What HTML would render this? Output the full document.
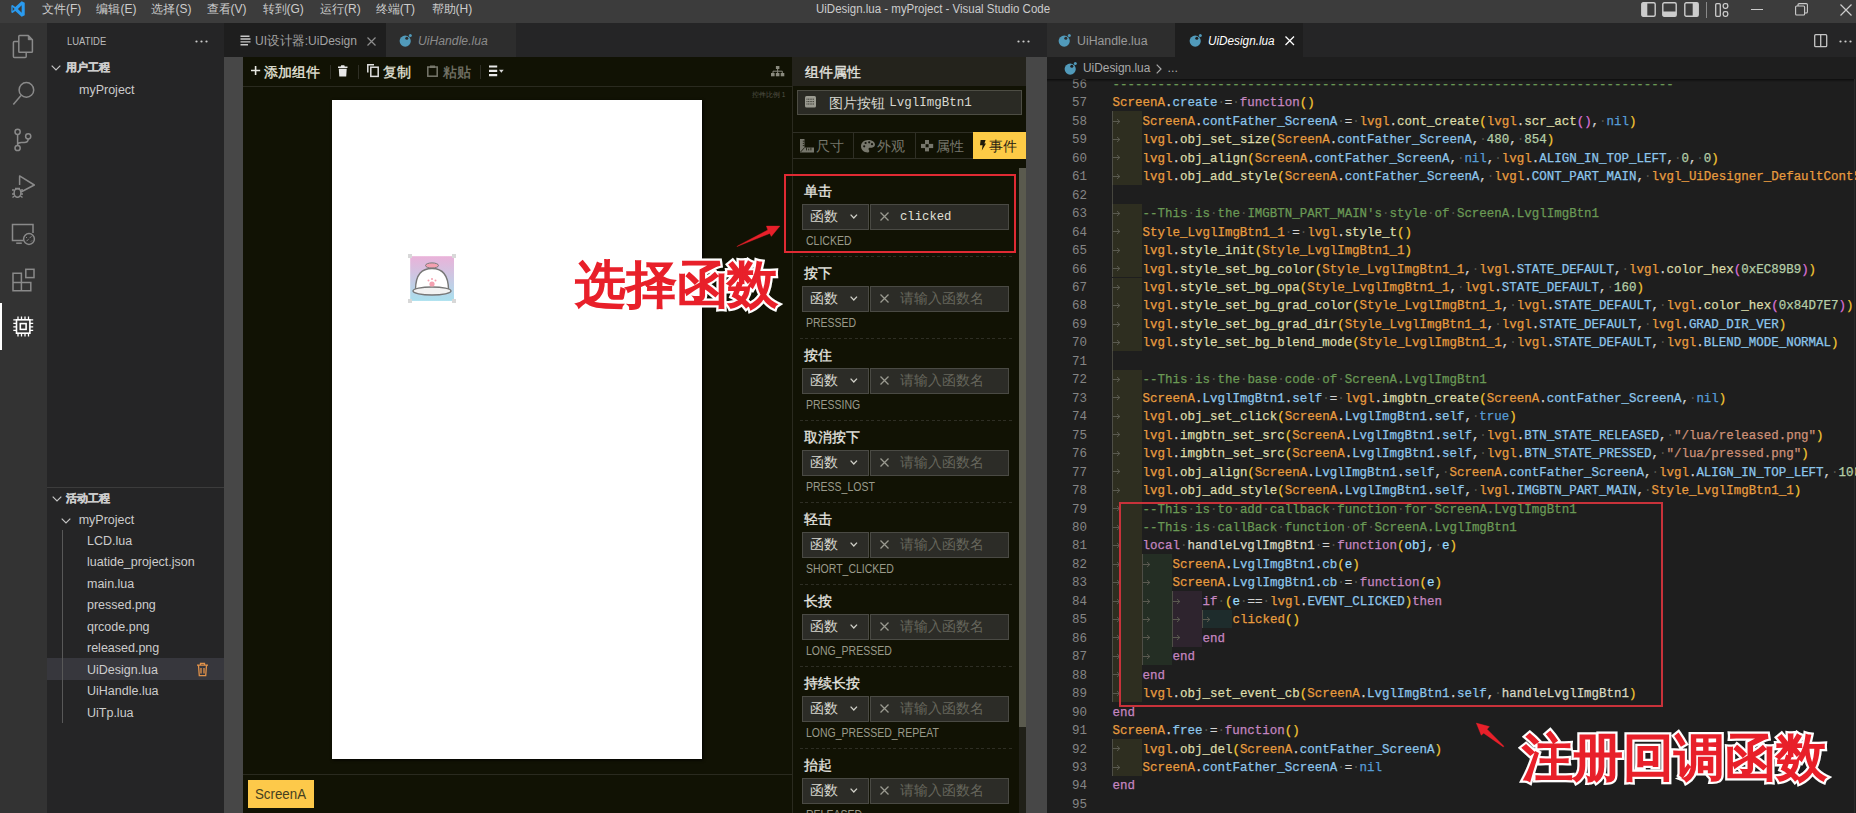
<!DOCTYPE html><html><head><meta charset="utf-8"><style>
*{margin:0;padding:0;box-sizing:border-box}
html,body{width:1856px;height:813px;overflow:hidden}
body{position:relative;background:#1e1e1e;font-family:"Liberation Sans",sans-serif}
.a{position:absolute}
.t{white-space:pre}
.code{position:absolute;font-family:"Liberation Mono",monospace;font-size:12.48px;-webkit-text-stroke:0.25px currentColor;line-height:18.45px;white-space:pre;height:18.45px}
.code i{font-style:normal;color:#55554c;-webkit-text-stroke:0}
.ln{position:absolute;left:-7px;width:47px;text-align:right;font-family:"Liberation Mono",monospace;font-size:12.5px;line-height:18.45px;color:#858585}
svg{position:absolute;overflow:visible}
</style></head><body><div class="a" style="left:0px;top:0px;width:1856px;height:23px;background:#3c3c3c"></div>
<div class="a t" style="left:41.9px;top:3px;font-size:12px;line-height:12px;color:#cccccc;">文件(F)</div>
<div class="a t" style="left:96.4px;top:3px;font-size:12px;line-height:12px;color:#cccccc;">编辑(E)</div>
<div class="a t" style="left:151.4px;top:3px;font-size:12px;line-height:12px;color:#cccccc;">选择(S)</div>
<div class="a t" style="left:206.5px;top:3px;font-size:12px;line-height:12px;color:#cccccc;">查看(V)</div>
<div class="a t" style="left:262.5px;top:3px;font-size:12px;line-height:12px;color:#cccccc;">转到(G)</div>
<div class="a t" style="left:320px;top:3px;font-size:12px;line-height:12px;color:#cccccc;">运行(R)</div>
<div class="a t" style="left:375.7px;top:3px;font-size:12px;line-height:12px;color:#cccccc;">终端(T)</div>
<div class="a t" style="left:431.5px;top:3px;font-size:12px;line-height:12px;color:#cccccc;">帮助(H)</div>
<div class="a t" style="left:816.2px;top:3px;font-size:12px;line-height:12px;color:#cccccc;;transform:scaleX(0.957);transform-origin:0 0">UiDesign.lua - myProject - Visual Studio Code</div>
<div class="a" style="left:0px;top:23px;width:47px;height:790px;background:#333333"></div>
<div class="a" style="left:0px;top:303px;width:2px;height:47px;background:#ffffff"></div>
<svg style="left:0px;top:23px;" width="47" height="47" viewBox="0 23 47 47"><rect x="13.4" y="41.5" width="12.8" height="15.9" rx="1" fill="none" stroke="#8a8a8a" stroke-width="1.5"/><path d="M19.6 35.6H28.3L32.4 39.7V51.4Q32.4 52.2 31.6 52.2H19.6Q18.8 52.2 18.8 51.4V36.4Q18.8 35.6 19.6 35.6Z" fill="#333333" stroke="#8a8a8a" stroke-width="1.5" stroke-linejoin="round"/><path d="M28.3 35.6V39.7H32.4Z" fill="#8a8a8a" stroke="#8a8a8a" stroke-width="1"/></svg>
<svg style="left:0px;top:70px;" width="47" height="47" viewBox="0 70 47 47"><circle cx="26.4" cy="89.9" r="7.3" fill="none" stroke="#8a8a8a" stroke-width="1.5"/><path d="M21 95.4L13.3 104.4" fill="none" stroke="#8a8a8a" stroke-width="1.5"/></svg>
<svg style="left:0px;top:117px;" width="47" height="47" viewBox="0 117 47 47"><circle cx="17.6" cy="131.8" r="2.6" fill="none" stroke="#8a8a8a" stroke-width="1.5"/><circle cx="28.2" cy="136.3" r="2.6" fill="none" stroke="#8a8a8a" stroke-width="1.5"/><circle cx="17.6" cy="148" r="2.6" fill="none" stroke="#8a8a8a" stroke-width="1.5"/><path d="M17.6 134.4V145.4M28.2 138.9c0 2.5-1.5 3.5-4 3.5h-2.8c-2 0-3.8 0.6-3.8 2.6" fill="none" stroke="#8a8a8a" stroke-width="1.5"/></svg>
<svg style="left:0px;top:164px;" width="47" height="47" viewBox="0 164 47 47"><path d="M19.6 185V175.9L34.3 185L21 192" fill="none" stroke="#8a8a8a" stroke-width="1.5" stroke-linejoin="round"/><ellipse cx="17.5" cy="193" rx="3.4" ry="4.2" fill="none" stroke="#8a8a8a" stroke-width="1.5"/><path d="M12 190h2.5M20.5 190H23M12 194h2.5M20.5 194H23M12.5 197.5l2-1.5M22.5 197.5l-2-1.5M15 188.5h5" fill="none" stroke="#8a8a8a" stroke-width="1.5" stroke-width="1.2"/></svg>
<svg style="left:0px;top:211px;" width="47" height="47" viewBox="0 211 47 47"><path d="M23.5 240.6H12.5V224.5H33V233" fill="none" stroke="#8a8a8a" stroke-width="1.5"/><path d="M16.2 243.2h5.6" fill="none" stroke="#8a8a8a" stroke-width="1.5"/><circle cx="29" cy="239" r="5.4" fill="#333" stroke="#8a8a8a" stroke-width="1.5"/><path d="M26.5 241.2l2-2M29.5 238.2l2-2M27 237l-1 1M32 240.5l-1 1" stroke="#8a8a8a" stroke-width="1"/></svg>
<svg style="left:0px;top:258px;" width="47" height="47" viewBox="0 258 47 47"><path d="M13 273.3h8.4v9.2h9.4v8.3H13Z M13 282.5h8.4v8.3 M21.4 282.5v8.3" fill="none" stroke="#8a8a8a" stroke-width="1.5"/><rect x="25.8" y="269.3" width="8.2" height="8.3" fill="none" stroke="#8a8a8a" stroke-width="1.5"/></svg>
<svg style="left:0px;top:305px;" width="47" height="47" viewBox="0 305 47 47"><rect x="16.5" y="319.8" width="13.4" height="13.4" fill="none" stroke="#ffffff" stroke-width="1.6"/><rect x="20.3" y="323.6" width="5.8" height="5.8" fill="none" stroke="#ffffff" stroke-width="1.6"/><path d="M18.0 316.6v3M18.0 333v3.4M13.3 319.8h3.2M29.8 319.8h3.4" stroke="#ffffff" stroke-width="1.3"/><path d="M21.5 316.6v3M21.5 333v3.4M13.3 323.3h3.2M29.8 323.3h3.4" stroke="#ffffff" stroke-width="1.3"/><path d="M25.0 316.6v3M25.0 333v3.4M13.3 326.8h3.2M29.8 326.8h3.4" stroke="#ffffff" stroke-width="1.3"/><path d="M28.5 316.6v3M28.5 333v3.4M13.3 330.3h3.2M29.8 330.3h3.4" stroke="#ffffff" stroke-width="1.3"/></svg>
<svg style="left:9.5px;top:1px;" width="16" height="16" viewBox="0 0 24 24"><path d="M17.5 0.3L7.9 9.1 3.8 6 2 6.8v10.4l1.8.8 4.1-3.1 9.6 8.8 4.6-2.2V2.5zM3.9 15V9l3 3zm13.6 2.6L11.9 12l5.6-5.6z" fill="#2a9bf0"/></svg>
<svg style="left:1641px;top:2px;" width="15" height="15" viewBox="0 0 15 15"><rect x="0.8" y="0.8" width="13.4" height="13.4" rx="1.5" fill="none" stroke="#cccccc" stroke-width="1.4"/><rect x="0.8" y="0.8" width="5.5" height="13.4" fill="#cccccc"/></svg>
<svg style="left:1662px;top:2px;" width="15" height="15" viewBox="0 0 15 15"><rect x="0.8" y="0.8" width="13.4" height="13.4" rx="1.5" fill="none" stroke="#cccccc" stroke-width="1.4"/><rect x="0.8" y="9.5" width="13.4" height="4.7" fill="#cccccc"/></svg>
<svg style="left:1683.5px;top:2px;" width="15" height="15" viewBox="0 0 15 15"><rect x="0.8" y="0.8" width="13.4" height="13.4" rx="1.5" fill="none" stroke="#cccccc" stroke-width="1.4"/><rect x="8.7" y="0.8" width="5.5" height="13.4" fill="#cccccc"/></svg>
<div class="a" style="left:1705.5px;top:1.5px;width:1px;height:16px;background:#8a8a8a"></div>
<svg style="left:1714.5px;top:2.5px;" width="14" height="14" viewBox="0 0 14 14"><rect x="0.7" y="0.7" width="4.6" height="12.6" rx="1" fill="none" stroke="#cccccc" stroke-width="1.3"/><rect x="8.2" y="0.7" width="4.6" height="4.6" rx="1.8" fill="none" stroke="#cccccc" stroke-width="1.3"/><rect x="8.2" y="8.7" width="4.6" height="4.6" rx="1.8" fill="none" stroke="#cccccc" stroke-width="1.3"/></svg>
<div class="a" style="left:1751px;top:9px;width:11.5px;height:1px;background:#cccccc"></div>
<svg style="left:1795px;top:3px;" width="13" height="13" viewBox="0 0 13 13"><rect x="0.6" y="3" width="9" height="9" rx="1" fill="none" stroke="#cccccc" stroke-width="1.1"/><path d="M3 3V1.8C3 1 3.5 0.6 4.3 0.6H11.2C12 0.6 12.4 1 12.4 1.8V8.7C12.4 9.5 12 10 11.2 10H9.6" fill="none" stroke="#cccccc" stroke-width="1.1"/></svg>
<svg style="left:1840px;top:3.5px;" width="12" height="12" viewBox="0 0 12 12"><path d="M0.5 0.5L11.5 11.5M11.5 0.5L0.5 11.5" stroke="#cccccc" stroke-width="1.2"/></svg>
<div class="a" style="left:47px;top:23px;width:177px;height:790px;background:#252526"></div>
<div class="a t" style="left:66.5px;top:36px;font-size:11px;line-height:11px;color:#bbbbbb;;transform:scaleX(0.86);transform-origin:0 0">LUATIDE</div>
<svg style="left:195px;top:39.5px;" width="13" height="3" viewBox="0 0 13 3"><circle cx="1.5" cy="1.5" r="1.1" fill="#ccc"/><circle cx="6.5" cy="1.5" r="1.1" fill="#ccc"/><circle cx="11.5" cy="1.5" r="1.1" fill="#ccc"/></svg>
<svg style="left:51.3px;top:64.5px;" width="10" height="6" viewBox="0 0 10 6"><path d="M0.7 0.7L5 5L9.3 0.7" fill="none" stroke="#c5c5c5" stroke-width="1.2"/></svg>
<div class="a t" style="left:66px;top:62px;font-size:11px;line-height:11px;color:#cccccc;font-weight:bold;-webkit-text-stroke:0.35px #cccccc">用户工程</div>
<div class="a t" style="left:79px;top:84px;font-size:12.5px;line-height:12.5px;color:#cccccc;">myProject</div>
<div class="a" style="left:47px;top:487px;width:177px;height:1px;background:#3c3c3c"></div>
<svg style="left:51.8px;top:495.5px;" width="10" height="6" viewBox="0 0 10 6"><path d="M0.7 0.7L5 5L9.3 0.7" fill="none" stroke="#c5c5c5" stroke-width="1.2"/></svg>
<div class="a t" style="left:66px;top:493px;font-size:11px;line-height:11px;color:#cccccc;font-weight:bold;-webkit-text-stroke:0.35px #cccccc">活动工程</div>
<svg style="left:60.7px;top:517.5px;" width="10" height="6" viewBox="0 0 10 6"><path d="M0.7 0.7L5 5L9.3 0.7" fill="none" stroke="#c5c5c5" stroke-width="1.2"/></svg>
<div class="a t" style="left:78.7px;top:514px;font-size:12.5px;line-height:12.5px;color:#cccccc;">myProject</div>
<div class="a" style="left:47px;top:658px;width:177px;height:22px;background:#37373d"></div>
<div class="a" style="left:62px;top:530px;width:1px;height:193px;background:#585858"></div>
<div class="a t" style="left:87px;top:535.0px;font-size:12.5px;line-height:12.5px;color:#cccccc;">LCD.lua</div>
<div class="a t" style="left:87px;top:556.45px;font-size:12.5px;line-height:12.5px;color:#cccccc;">luatide_project.json</div>
<div class="a t" style="left:87px;top:577.9px;font-size:12.5px;line-height:12.5px;color:#cccccc;">main.lua</div>
<div class="a t" style="left:87px;top:599.35px;font-size:12.5px;line-height:12.5px;color:#cccccc;">pressed.png</div>
<div class="a t" style="left:87px;top:620.8px;font-size:12.5px;line-height:12.5px;color:#cccccc;">qrcode.png</div>
<div class="a t" style="left:87px;top:642.25px;font-size:12.5px;line-height:12.5px;color:#cccccc;">released.png</div>
<div class="a t" style="left:87px;top:663.7px;font-size:12.5px;line-height:12.5px;color:#cccccc;">UiDesign.lua</div>
<div class="a t" style="left:87px;top:685.15px;font-size:12.5px;line-height:12.5px;color:#cccccc;">UiHandle.lua</div>
<div class="a t" style="left:87px;top:706.6px;font-size:12.5px;line-height:12.5px;color:#cccccc;">UiTp.lua</div>
<svg style="left:196px;top:661.5px;" width="13" height="15" viewBox="0 0 13 15"><path d="M1 3.2h11M4.5 3V1.3h4V3M2.5 3.5l0.8 10.2h6.4l0.8-10.2M5 6v5.5M8 6v5.5" fill="none" stroke="#e2924a" stroke-width="1.3"/></svg>
<div class="a" style="left:224px;top:23px;width:823px;height:34px;background:#252526"></div>
<div class="a" style="left:224px;top:23px;width:161.5px;height:34px;background:#1e1e1e"></div>
<div class="a" style="left:385.5px;top:23px;width:130px;height:34px;background:#2d2d2d"></div>
<svg style="left:240px;top:34.5px;" width="11" height="11" viewBox="0 0 11 11"><path d="M0.5 1.2h9M0.5 4h10M0.5 6.9h10M0.5 9.7h7.5" stroke="#c8c8c8" stroke-width="1.4"/></svg>
<div class="a t" style="left:255.4px;top:35.3px;font-size:12.5px;line-height:12.5px;color:#a3a3a3;;transform:scaleX(0.965);transform-origin:0 0">UI设计器:UiDesign</div>
<svg style="left:367px;top:37px;" width="9" height="9" viewBox="0 0 9 9"><path d="M0.5 0.5L8.5 8.5M8.5 0.5L0.5 8.5" stroke="#8e8e8e" stroke-width="1.2"/></svg>
<svg style="left:398.5px;top:33.8px;" width="13" height="13" viewBox="0 0 13 13"><circle cx="6.2" cy="7.1" r="5.6" fill="#519aba"/><circle cx="7.8" cy="4.3" r="1.5" fill="#2d2d2d"/><circle cx="11.3" cy="1.5" r="1.5" fill="#519aba"/></svg>
<div class="a t" style="left:418px;top:35px;font-size:12.5px;line-height:12.5px;color:#8b8b8b;font-style:italic;transform:scaleX(0.975);transform-origin:0 0">UiHandle.lua</div>
<svg style="left:1016.7px;top:39.5px;" width="13" height="3" viewBox="0 0 13 3"><circle cx="1.5" cy="1.5" r="1.1" fill="#ccc"/><circle cx="6.5" cy="1.5" r="1.1" fill="#ccc"/><circle cx="11.5" cy="1.5" r="1.1" fill="#ccc"/></svg>
<div class="a" style="left:224px;top:57px;width:19px;height:756px;background:#474747"></div>
<div class="a" style="left:243px;top:57px;width:783px;height:756px;background:#111204"></div>
<div class="a" style="left:1026px;top:57px;width:21px;height:756px;background:#474747"></div>
<div class="a" style="left:243px;top:85.5px;width:549px;height:1px;background:#2a2a1f"></div>
<svg style="left:250.8px;top:66.1px;" width="9.2" height="9" viewBox="0 0 9.2 9"><path d="M4.6 0v9M0 4.5h9.2" stroke="#e8e8e2" stroke-width="1.6"/></svg>
<div class="a t" style="left:264.4px;top:65.5px;font-size:13.5px;line-height:13.5px;color:#e6e6dc;-webkit-text-stroke:0.3px currentColor">添加组件</div>
<div class="a" style="left:329.5px;top:65.4px;width:1px;height:13.3px;background:#2f2f25"></div>
<svg style="left:338.4px;top:64.8px;" width="9.5" height="11.6" viewBox="0 0 9.5 11.6"><path d="M3.2 0.2h3.1l0.5 1.2h2.7v1.6H0v-1.6h2.7z" fill="#e8e8e8"/><path d="M0.8 3.8h7.9l-0.5 7.8H1.3z" fill="#e8e8e8"/></svg>
<div class="a" style="left:357.5px;top:65.4px;width:1px;height:13.3px;background:#2f2f25"></div>
<svg style="left:366.5px;top:64px;" width="12" height="13" viewBox="0 0 12 13"><path d="M0.8 8.5V0.8h6.2" fill="none" stroke="#e0e0e0" stroke-width="1.5"/><rect x="3.8" y="3.2" width="7.4" height="9.2" fill="none" stroke="#e0e0e0" stroke-width="1.5"/></svg>
<div class="a t" style="left:383.4px;top:65.5px;font-size:13.5px;line-height:13.5px;color:#e6e6dc;-webkit-text-stroke:0.3px currentColor">复制</div>
<svg style="left:426.6px;top:64.5px;" width="11" height="12" viewBox="0 0 11 12"><rect x="0.8" y="2" width="9.4" height="9.2" fill="none" stroke="#78786c" stroke-width="1.5"/><rect x="3" y="0.5" width="5" height="2.5" fill="#78786c"/></svg>
<div class="a t" style="left:442.5px;top:65.5px;font-size:13.5px;line-height:13.5px;color:#78786c;-webkit-text-stroke:0.3px currentColor">粘贴</div>
<div class="a" style="left:480px;top:65.4px;width:1px;height:13.3px;background:#2f2f25"></div>
<svg style="left:489px;top:65.3px;" width="15" height="12" viewBox="0 0 15 12"><path d="M0 1.5h8.2M0 5.8h8.2M0 10.1h8.2" stroke="#e8e8e8" stroke-width="2.2"/><path d="M10 4.8h4.7L12.35 7.8z" fill="#d8d8d8"/></svg>
<svg style="left:771.3px;top:66px;" width="13.3" height="10.3" viewBox="0 0 13.3 10.3"><rect x="4.9" y="0" width="3.5" height="3" fill="#8a8a7e"/><path d="M6.65 3v2.2M2 7V5.2h9.3V7M6.65 5.2V7" fill="none" stroke="#8a8a7e" stroke-width="1"/><rect x="0" y="7" width="3.6" height="3.3" fill="#8a8a7e"/><rect x="4.85" y="7" width="3.6" height="3.3" fill="#8a8a7e"/><rect x="9.7" y="7" width="3.6" height="3.3" fill="#8a8a7e"/></svg>
<div class="a" style="left:332px;top:100px;width:370.3px;height:659.4px;background:#ffffff;box-shadow:1px 1px 3px rgba(0,0,0,0.9)"></div>
<div class="a t" style="left:752px;top:91.5px;font-size:6.5px;line-height:6.5px;color:#55554a;">控件比例 1</div>
<svg style="left:408px;top:253.5px;" width="48" height="49" viewBox="0 0 48 49"><defs><linearGradient id="g1" x1="0" y1="0" x2="0" y2="1"><stop offset="0" stop-color="#eab2d9"/><stop offset="1" stop-color="#a9e0ee"/></linearGradient></defs>
<rect x="2.2" y="2.2" width="43.8" height="44.7" fill="url(#g1)"/>
<rect x="0" y="0" width="4" height="4" fill="#d8d8d8"/><rect x="44" y="0" width="4" height="4" fill="#d8d8d8"/><rect x="0" y="45" width="4" height="4" fill="#d8d8d8"/><rect x="44" y="45" width="4" height="4" fill="#d8d8d8"/>
<ellipse cx="24" cy="11.5" rx="6.5" ry="2.6" fill="#f4a0b0" stroke="#7a7a7a" stroke-width="1"/>
<path d="M7.5 36 C7.5 20 14 14.5 24 14.5 C34 14.5 40.5 20 40.5 36 Z" fill="#ffffff" stroke="#777" stroke-width="1.4"/>
<ellipse cx="24" cy="37" rx="19" ry="4" fill="#f2f2f2" stroke="#777" stroke-width="1.4"/>
<circle cx="24" cy="30" r="2.6" fill="#f4a0b0"/><circle cx="20.5" cy="26.5" r="1" fill="#f4a0b0"/><circle cx="24" cy="25" r="1" fill="#f4a0b0"/><circle cx="27.5" cy="26.5" r="1" fill="#f4a0b0"/></svg>
<div class="a" style="left:243px;top:773.5px;width:549px;height:1px;background:#2a2a1f"></div>
<div class="a" style="left:248px;top:780.3px;width:66px;height:27.7px;background:#fdc94a"></div>
<div class="a t" style="left:255px;top:786.5px;font-size:14px;line-height:14px;color:#45401f;;transform:scaleX(0.95);transform-origin:0 0">ScreenA</div>
<div class="a" style="left:792px;top:57px;width:234px;height:29px;background:#24231c"></div>
<div class="a" style="left:792px;top:86px;width:1px;height:727px;background:#2a2a1f"></div>
<div class="a t" style="left:804.5px;top:65.5px;font-size:13.5px;line-height:13.5px;color:#e6e6e0;-webkit-text-stroke:0.3px currentColor">组件属性</div>
<div class="a" style="left:796.7px;top:90.3px;width:225.6px;height:24.4px;background:#2a2a24;border:1px solid #4d4d44"></div>
<svg style="left:805px;top:96px;" width="11" height="11.5" viewBox="0 0 11 11.5"><rect x="0" y="0" width="11" height="11.5" rx="1.5" fill="#9a9a90"/><path d="M1.5 3.2h8M1.5 5.6h8M1.5 8h8" stroke="#2a2a24" stroke-width="0.9" stroke-dasharray="1 0.6"/></svg>
<div class="a t" style="left:828.5px;top:96.5px;font-size:13.5px;line-height:13.5px;color:#d8d8d0;">图片按钮</div>
<div class="a t" style="left:889.3px;top:97px;font-size:12.5px;line-height:12.5px;color:#d8d8d0;font-family:'Liberation Mono',monospace;transform:scaleX(1.0);transform-origin:0 0">LvglImgBtn1</div>
<div class="a" style="left:793px;top:132px;width:233px;height:27px;background:#111204;border-top:1px solid #2f2f25;border-bottom:1px solid #2f2f25"></div>
<div class="a" style="left:853.2px;top:132px;width:1px;height:27px;background:#2f2f25"></div>
<div class="a" style="left:914.6px;top:132px;width:1px;height:27px;background:#2f2f25"></div>
<div class="a" style="left:972.8px;top:132px;width:53.2px;height:27px;background:#fdcb46"></div>
<svg style="left:799.7px;top:139px;" width="14" height="13.6" viewBox="0 0 14 13.6"><path d="M0 0h4.5v8.6h9.5v5H0z" fill="#77776c"/><path d="M2.8 2.2h1.7M2.8 4.4h1.2M2.8 6.6h1.7M6.5 11.4v-2.8M8.7 11.4v-1.8M10.9 11.4v-2.8M0.4 13.2L4.5 8.6" stroke="#111204" stroke-width="0.8"/></svg>
<div class="a t" style="left:816px;top:139.5px;font-size:13.5px;line-height:13.5px;color:#77776c;">尺寸</div>
<svg style="left:860.7px;top:140px;" width="14" height="12.5" viewBox="0 0 14 12.5"><path d="M7 0C3 0 0 2.8 0 6.3 0 9.8 3 12.5 6.5 12.5 7.8 12.5 8.3 11.8 8.3 11 8.3 10 7.5 9.8 7.5 9 7.5 8.2 8.2 7.7 9 7.7H10.8C12.6 7.7 14 6.4 14 4.6 14 2 11 0 7 0z" fill="#77776c"/><circle cx="3.2" cy="6.3" r="1.1" fill="#12120a"/><circle cx="4.6" cy="3" r="1.1" fill="#12120a"/><circle cx="8.2" cy="2.3" r="1.1" fill="#12120a"/><circle cx="11" cy="4.2" r="1.1" fill="#12120a"/></svg>
<div class="a t" style="left:876.9px;top:139.5px;font-size:13.5px;line-height:13.5px;color:#77776c;">外观</div>
<svg style="left:921px;top:140.3px;" width="12.2" height="11.4" viewBox="0 0 12.2 11.4"><rect x="4" y="0" width="4" height="4.2" fill="#77776c"/><rect x="0" y="3.9" width="4.6" height="4.2" fill="#77776c"/><rect x="7.6" y="3.9" width="4.6" height="4.2" fill="#77776c"/><rect x="4" y="7.3" width="4" height="4.1" fill="#77776c"/></svg>
<div class="a t" style="left:935.7px;top:139.5px;font-size:13.5px;line-height:13.5px;color:#77776c;">属性</div>
<svg style="left:980.2px;top:139.7px;" width="6" height="10.5" viewBox="0 0 6 10.5"><path d="M0.6 0H5.6L4.4 3.6H6L1.8 10.5 2.6 5.2H0z" fill="#1e1a0a"/></svg>
<div class="a t" style="left:989px;top:139.5px;font-size:13.5px;line-height:13.5px;color:#2a2412;">事件</div>
<div class="a t" style="left:804.4px;top:184.5px;font-size:13.5px;line-height:13.5px;color:#e6e6e0;-webkit-text-stroke:0.3px currentColor">单击</div>
<div class="a" style="left:801.5px;top:204.2px;width:67.1px;height:25.4px;background:#2c2c27;border:1px solid #4a4a44"></div>
<div class="a t" style="left:810px;top:209.5px;font-size:13.5px;line-height:13.5px;color:#d8d8d0;">函数</div>
<svg style="left:850.4px;top:213.7px;" width="7.6" height="5" viewBox="0 0 7.6 5"><path d="M0.6 0.6L3.8 4L7 0.6" fill="none" stroke="#d0d0c8" stroke-width="1.3"/></svg>
<div class="a" style="left:870px;top:204.2px;width:138.7px;height:25.4px;background:#2c2c27;border:1px solid #4a4a44"></div>
<svg style="left:879.6px;top:211.5px;" width="9" height="9" viewBox="0 0 9 9"><path d="M0.5 0.5L8.5 8.5M8.5 0.5L0.5 8.5" stroke="#9a9a90" stroke-width="1.3"/></svg>
<div class="a t" style="left:899.6px;top:210.5px;font-size:12.5px;line-height:12.5px;color:#e0e0d8;font-family:'Liberation Mono',monospace;transform:scaleX(0.98);transform-origin:0 0">clicked</div>
<div class="a t" style="left:806px;top:234.5px;font-size:12px;line-height:12px;color:#9a9a8a;;transform:scaleX(0.875);transform-origin:0 0">CLICKED</div>
<div class="a" style="left:800px;top:256px;width:212px;height:1px;background:repeating-linear-gradient(90deg,#2e2e24 0 3px,transparent 3px 5.5px)"></div>
<div class="a t" style="left:804.4px;top:266.5px;font-size:13.5px;line-height:13.5px;color:#e6e6e0;-webkit-text-stroke:0.3px currentColor">按下</div>
<div class="a" style="left:801.5px;top:286.2px;width:67.1px;height:25.4px;background:#2c2c27;border:1px solid #4a4a44"></div>
<div class="a t" style="left:810px;top:291.5px;font-size:13.5px;line-height:13.5px;color:#d8d8d0;">函数</div>
<svg style="left:850.4px;top:295.7px;" width="7.6" height="5" viewBox="0 0 7.6 5"><path d="M0.6 0.6L3.8 4L7 0.6" fill="none" stroke="#d0d0c8" stroke-width="1.3"/></svg>
<div class="a" style="left:870px;top:286.2px;width:138.7px;height:25.4px;background:#2c2c27;border:1px solid #4a4a44"></div>
<svg style="left:879.6px;top:293.5px;" width="9" height="9" viewBox="0 0 9 9"><path d="M0.5 0.5L8.5 8.5M8.5 0.5L0.5 8.5" stroke="#9a9a90" stroke-width="1.3"/></svg>
<div class="a t" style="left:899.6px;top:291.5px;font-size:13.5px;line-height:13.5px;color:#66665c;">请输入函数名</div>
<div class="a t" style="left:806px;top:316.5px;font-size:12px;line-height:12px;color:#9a9a8a;;transform:scaleX(0.875);transform-origin:0 0">PRESSED</div>
<div class="a" style="left:800px;top:338px;width:212px;height:1px;background:repeating-linear-gradient(90deg,#2e2e24 0 3px,transparent 3px 5.5px)"></div>
<div class="a t" style="left:804.4px;top:348.5px;font-size:13.5px;line-height:13.5px;color:#e6e6e0;-webkit-text-stroke:0.3px currentColor">按住</div>
<div class="a" style="left:801.5px;top:368.2px;width:67.1px;height:25.4px;background:#2c2c27;border:1px solid #4a4a44"></div>
<div class="a t" style="left:810px;top:373.5px;font-size:13.5px;line-height:13.5px;color:#d8d8d0;">函数</div>
<svg style="left:850.4px;top:377.7px;" width="7.6" height="5" viewBox="0 0 7.6 5"><path d="M0.6 0.6L3.8 4L7 0.6" fill="none" stroke="#d0d0c8" stroke-width="1.3"/></svg>
<div class="a" style="left:870px;top:368.2px;width:138.7px;height:25.4px;background:#2c2c27;border:1px solid #4a4a44"></div>
<svg style="left:879.6px;top:375.5px;" width="9" height="9" viewBox="0 0 9 9"><path d="M0.5 0.5L8.5 8.5M8.5 0.5L0.5 8.5" stroke="#9a9a90" stroke-width="1.3"/></svg>
<div class="a t" style="left:899.6px;top:373.5px;font-size:13.5px;line-height:13.5px;color:#66665c;">请输入函数名</div>
<div class="a t" style="left:806px;top:398.5px;font-size:12px;line-height:12px;color:#9a9a8a;;transform:scaleX(0.875);transform-origin:0 0">PRESSING</div>
<div class="a" style="left:800px;top:420px;width:212px;height:1px;background:repeating-linear-gradient(90deg,#2e2e24 0 3px,transparent 3px 5.5px)"></div>
<div class="a t" style="left:804.4px;top:430.5px;font-size:13.5px;line-height:13.5px;color:#e6e6e0;-webkit-text-stroke:0.3px currentColor">取消按下</div>
<div class="a" style="left:801.5px;top:450.2px;width:67.1px;height:25.4px;background:#2c2c27;border:1px solid #4a4a44"></div>
<div class="a t" style="left:810px;top:455.5px;font-size:13.5px;line-height:13.5px;color:#d8d8d0;">函数</div>
<svg style="left:850.4px;top:459.7px;" width="7.6" height="5" viewBox="0 0 7.6 5"><path d="M0.6 0.6L3.8 4L7 0.6" fill="none" stroke="#d0d0c8" stroke-width="1.3"/></svg>
<div class="a" style="left:870px;top:450.2px;width:138.7px;height:25.4px;background:#2c2c27;border:1px solid #4a4a44"></div>
<svg style="left:879.6px;top:457.5px;" width="9" height="9" viewBox="0 0 9 9"><path d="M0.5 0.5L8.5 8.5M8.5 0.5L0.5 8.5" stroke="#9a9a90" stroke-width="1.3"/></svg>
<div class="a t" style="left:899.6px;top:455.5px;font-size:13.5px;line-height:13.5px;color:#66665c;">请输入函数名</div>
<div class="a t" style="left:806px;top:480.5px;font-size:12px;line-height:12px;color:#9a9a8a;;transform:scaleX(0.875);transform-origin:0 0">PRESS_LOST</div>
<div class="a" style="left:800px;top:502px;width:212px;height:1px;background:repeating-linear-gradient(90deg,#2e2e24 0 3px,transparent 3px 5.5px)"></div>
<div class="a t" style="left:804.4px;top:512.5px;font-size:13.5px;line-height:13.5px;color:#e6e6e0;-webkit-text-stroke:0.3px currentColor">轻击</div>
<div class="a" style="left:801.5px;top:532.2px;width:67.1px;height:25.4px;background:#2c2c27;border:1px solid #4a4a44"></div>
<div class="a t" style="left:810px;top:537.5px;font-size:13.5px;line-height:13.5px;color:#d8d8d0;">函数</div>
<svg style="left:850.4px;top:541.7px;" width="7.6" height="5" viewBox="0 0 7.6 5"><path d="M0.6 0.6L3.8 4L7 0.6" fill="none" stroke="#d0d0c8" stroke-width="1.3"/></svg>
<div class="a" style="left:870px;top:532.2px;width:138.7px;height:25.4px;background:#2c2c27;border:1px solid #4a4a44"></div>
<svg style="left:879.6px;top:539.5px;" width="9" height="9" viewBox="0 0 9 9"><path d="M0.5 0.5L8.5 8.5M8.5 0.5L0.5 8.5" stroke="#9a9a90" stroke-width="1.3"/></svg>
<div class="a t" style="left:899.6px;top:537.5px;font-size:13.5px;line-height:13.5px;color:#66665c;">请输入函数名</div>
<div class="a t" style="left:806px;top:562.5px;font-size:12px;line-height:12px;color:#9a9a8a;;transform:scaleX(0.875);transform-origin:0 0">SHORT_CLICKED</div>
<div class="a" style="left:800px;top:584px;width:212px;height:1px;background:repeating-linear-gradient(90deg,#2e2e24 0 3px,transparent 3px 5.5px)"></div>
<div class="a t" style="left:804.4px;top:594.5px;font-size:13.5px;line-height:13.5px;color:#e6e6e0;-webkit-text-stroke:0.3px currentColor">长按</div>
<div class="a" style="left:801.5px;top:614.2px;width:67.1px;height:25.4px;background:#2c2c27;border:1px solid #4a4a44"></div>
<div class="a t" style="left:810px;top:619.5px;font-size:13.5px;line-height:13.5px;color:#d8d8d0;">函数</div>
<svg style="left:850.4px;top:623.7px;" width="7.6" height="5" viewBox="0 0 7.6 5"><path d="M0.6 0.6L3.8 4L7 0.6" fill="none" stroke="#d0d0c8" stroke-width="1.3"/></svg>
<div class="a" style="left:870px;top:614.2px;width:138.7px;height:25.4px;background:#2c2c27;border:1px solid #4a4a44"></div>
<svg style="left:879.6px;top:621.5px;" width="9" height="9" viewBox="0 0 9 9"><path d="M0.5 0.5L8.5 8.5M8.5 0.5L0.5 8.5" stroke="#9a9a90" stroke-width="1.3"/></svg>
<div class="a t" style="left:899.6px;top:619.5px;font-size:13.5px;line-height:13.5px;color:#66665c;">请输入函数名</div>
<div class="a t" style="left:806px;top:644.5px;font-size:12px;line-height:12px;color:#9a9a8a;;transform:scaleX(0.875);transform-origin:0 0">LONG_PRESSED</div>
<div class="a" style="left:800px;top:666px;width:212px;height:1px;background:repeating-linear-gradient(90deg,#2e2e24 0 3px,transparent 3px 5.5px)"></div>
<div class="a t" style="left:804.4px;top:676.5px;font-size:13.5px;line-height:13.5px;color:#e6e6e0;-webkit-text-stroke:0.3px currentColor">持续长按</div>
<div class="a" style="left:801.5px;top:696.2px;width:67.1px;height:25.4px;background:#2c2c27;border:1px solid #4a4a44"></div>
<div class="a t" style="left:810px;top:701.5px;font-size:13.5px;line-height:13.5px;color:#d8d8d0;">函数</div>
<svg style="left:850.4px;top:705.7px;" width="7.6" height="5" viewBox="0 0 7.6 5"><path d="M0.6 0.6L3.8 4L7 0.6" fill="none" stroke="#d0d0c8" stroke-width="1.3"/></svg>
<div class="a" style="left:870px;top:696.2px;width:138.7px;height:25.4px;background:#2c2c27;border:1px solid #4a4a44"></div>
<svg style="left:879.6px;top:703.5px;" width="9" height="9" viewBox="0 0 9 9"><path d="M0.5 0.5L8.5 8.5M8.5 0.5L0.5 8.5" stroke="#9a9a90" stroke-width="1.3"/></svg>
<div class="a t" style="left:899.6px;top:701.5px;font-size:13.5px;line-height:13.5px;color:#66665c;">请输入函数名</div>
<div class="a t" style="left:806px;top:726.5px;font-size:12px;line-height:12px;color:#9a9a8a;;transform:scaleX(0.875);transform-origin:0 0">LONG_PRESSED_REPEAT</div>
<div class="a" style="left:800px;top:748px;width:212px;height:1px;background:repeating-linear-gradient(90deg,#2e2e24 0 3px,transparent 3px 5.5px)"></div>
<div class="a t" style="left:804.4px;top:758.5px;font-size:13.5px;line-height:13.5px;color:#e6e6e0;-webkit-text-stroke:0.3px currentColor">抬起</div>
<div class="a" style="left:801.5px;top:778.2px;width:67.1px;height:25.4px;background:#2c2c27;border:1px solid #4a4a44"></div>
<div class="a t" style="left:810px;top:783.5px;font-size:13.5px;line-height:13.5px;color:#d8d8d0;">函数</div>
<svg style="left:850.4px;top:787.7px;" width="7.6" height="5" viewBox="0 0 7.6 5"><path d="M0.6 0.6L3.8 4L7 0.6" fill="none" stroke="#d0d0c8" stroke-width="1.3"/></svg>
<div class="a" style="left:870px;top:778.2px;width:138.7px;height:25.4px;background:#2c2c27;border:1px solid #4a4a44"></div>
<svg style="left:879.6px;top:785.5px;" width="9" height="9" viewBox="0 0 9 9"><path d="M0.5 0.5L8.5 8.5M8.5 0.5L0.5 8.5" stroke="#9a9a90" stroke-width="1.3"/></svg>
<div class="a t" style="left:899.6px;top:783.5px;font-size:13.5px;line-height:13.5px;color:#66665c;">请输入函数名</div>
<div class="a t" style="left:806px;top:808.5px;font-size:12px;line-height:12px;color:#9a9a8a;;transform:scaleX(0.875);transform-origin:0 0">RELEASED</div>
<div class="a" style="left:800px;top:830px;width:212px;height:1px;background:repeating-linear-gradient(90deg,#2e2e24 0 3px,transparent 3px 5.5px)"></div>
<div class="a" style="left:1018.5px;top:168.3px;width:7.5px;height:644.7px;background:#202018"></div>
<div class="a" style="left:1018.5px;top:168.3px;width:7.5px;height:558.3px;background:#5a5a4e"></div>
<div class="a" style="left:1047px;top:23px;width:809px;height:34px;background:#252526"></div>
<div class="a" style="left:1047px;top:23px;width:128.4px;height:34px;background:#2d2d2d"></div>
<div class="a" style="left:1175.4px;top:23px;width:127.6px;height:34px;background:#1e1e1e"></div>
<svg style="left:1058.2px;top:33.6px;" width="13" height="13" viewBox="0 0 13 13"><circle cx="6.2" cy="7.1" r="5.6" fill="#519aba"/><circle cx="7.8" cy="4.3" r="1.5" fill="#2d2d2d"/><circle cx="11.3" cy="1.5" r="1.5" fill="#519aba"/></svg>
<div class="a t" style="left:1076.8px;top:35px;font-size:12.5px;line-height:12.5px;color:#9a9a9a;;transform:scaleX(0.985);transform-origin:0 0">UiHandle.lua</div>
<svg style="left:1188.6px;top:33.6px;" width="13" height="13" viewBox="0 0 13 13"><circle cx="6.2" cy="7.1" r="5.6" fill="#519aba"/><circle cx="7.8" cy="4.3" r="1.5" fill="#1e1e1e"/><circle cx="11.3" cy="1.5" r="1.5" fill="#519aba"/></svg>
<div class="a t" style="left:1207.5px;top:34.5px;font-size:12.5px;line-height:12.5px;color:#ffffff;font-style:italic;transform:scaleX(0.94);transform-origin:0 0">UiDesign.lua</div>
<svg style="left:1285px;top:36.4px;" width="9.5" height="9.5" viewBox="0 0 9.5 9.5"><path d="M0.5 0.5L9 9M9 0.5L0.5 9" stroke="#ffffff" stroke-width="1.3"/></svg>
<svg style="left:1814px;top:33.8px;" width="13.5" height="13.5" viewBox="0 0 13.5 13.5"><rect x="0.7" y="0.7" width="12" height="12" rx="1" fill="none" stroke="#c5c5c5" stroke-width="1.3"/><path d="M6.7 0.7v12" stroke="#c5c5c5" stroke-width="1.3"/></svg>
<svg style="left:1839px;top:39.5px;" width="13" height="3" viewBox="0 0 13 3"><circle cx="1.5" cy="1.5" r="1.1" fill="#ccc"/><circle cx="6.5" cy="1.5" r="1.1" fill="#ccc"/><circle cx="11.5" cy="1.5" r="1.1" fill="#ccc"/></svg>
<div class="a" style="left:1047px;top:57px;width:809px;height:22px;background:#1e1e1e"></div>
<svg style="left:1064px;top:62px;" width="13" height="13" viewBox="0 0 13 13"><circle cx="6.2" cy="7.1" r="5.6" fill="#519aba"/><circle cx="7.8" cy="4.3" r="1.5" fill="#1e1e1e"/><circle cx="11.3" cy="1.5" r="1.5" fill="#519aba"/></svg>
<div class="a t" style="left:1082.7px;top:62px;font-size:12.5px;line-height:12.5px;color:#a9a9a9;;transform:scaleX(0.95);transform-origin:0 0">UiDesign.lua</div>
<svg style="left:1155.5px;top:63.5px;" width="6" height="10" viewBox="0 0 6 10"><path d="M0.7 0.7L5 5L0.7 9.3" fill="none" stroke="#a9a9a9" stroke-width="1.2"/></svg>
<div class="a t" style="left:1167.5px;top:62px;font-size:12.5px;line-height:12.5px;color:#a9a9a9;">...</div>
<div class="a" style="left:1047px;top:79px;width:809px;height:734px;overflow:hidden"><div class="ln" style="top:-3.06px">56</div><div class="code" style="top:-3.06px;left:65.6px"><span style="color:#6a9955">---------------------------------------------------------------------------</span></div><div class="ln" style="top:15.40px">57</div><div class="code" style="top:15.40px;left:65.6px"><span style="color:#e89c3f">ScreenA</span><span style="color:#d4d4d4">.</span><span style="color:#8dc6ec">create</span><i>·</i><span style="color:#d4d4d4">=</span><i>·</i><span style="color:#c586c0">function</span><span style="color:#f2c634">(</span><span style="color:#f2c634">)</span></div><div class="ln" style="top:33.86px">58</div><div class="a" style="left:65px;top:32.36px;width:30px;height:18.45px;background:#2e2e20;border-left:1px solid #4e4e46"><svg style="left:-0.5px;top:6.2px" width="8" height="7" viewBox="0 0 8 7"><path d="M0 3.5H7M4 1L6.8 3.5L4 6" stroke="#5a5a50" stroke-width="1" fill="none"/></svg></div><div class="code" style="top:33.86px;left:95.6px"><span style="color:#e89c3f">ScreenA</span><span style="color:#d4d4d4">.</span><span style="color:#8dc6ec">contFather_ScreenA</span><i>·</i><span style="color:#d4d4d4">=</span><i>·</i><span style="color:#e89c3f">lvgl</span><span style="color:#d4d4d4">.</span><span style="color:#dcdcaa">cont_create</span><span style="color:#f2c634">(</span><span style="color:#e89c3f">lvgl</span><span style="color:#d4d4d4">.</span><span style="color:#dcdcaa">scr_act</span><span style="color:#da70d6">(</span><span style="color:#da70d6">)</span><span style="color:#d4d4d4">,</span><i>·</i><span style="color:#569cd6">nil</span><span style="color:#f2c634">)</span></div><div class="ln" style="top:52.32px">59</div><div class="a" style="left:65px;top:50.82px;width:30px;height:18.45px;background:#2e2e20;border-left:1px solid #4e4e46"><svg style="left:-0.5px;top:6.2px" width="8" height="7" viewBox="0 0 8 7"><path d="M0 3.5H7M4 1L6.8 3.5L4 6" stroke="#5a5a50" stroke-width="1" fill="none"/></svg></div><div class="code" style="top:52.32px;left:95.6px"><span style="color:#e89c3f">lvgl</span><span style="color:#d4d4d4">.</span><span style="color:#dcdcaa">obj_set_size</span><span style="color:#f2c634">(</span><span style="color:#e89c3f">ScreenA</span><span style="color:#d4d4d4">.</span><span style="color:#8dc6ec">contFather_ScreenA</span><span style="color:#d4d4d4">,</span><i>·</i><span style="color:#b5cea8">480</span><span style="color:#d4d4d4">,</span><i>·</i><span style="color:#b5cea8">854</span><span style="color:#f2c634">)</span></div><div class="ln" style="top:70.78px">60</div><div class="a" style="left:65px;top:69.28px;width:30px;height:18.45px;background:#2e2e20;border-left:1px solid #4e4e46"><svg style="left:-0.5px;top:6.2px" width="8" height="7" viewBox="0 0 8 7"><path d="M0 3.5H7M4 1L6.8 3.5L4 6" stroke="#5a5a50" stroke-width="1" fill="none"/></svg></div><div class="code" style="top:70.78px;left:95.6px"><span style="color:#e89c3f">lvgl</span><span style="color:#d4d4d4">.</span><span style="color:#dcdcaa">obj_align</span><span style="color:#f2c634">(</span><span style="color:#e89c3f">ScreenA</span><span style="color:#d4d4d4">.</span><span style="color:#8dc6ec">contFather_ScreenA</span><span style="color:#d4d4d4">,</span><i>·</i><span style="color:#569cd6">nil</span><span style="color:#d4d4d4">,</span><i>·</i><span style="color:#e89c3f">lvgl</span><span style="color:#d4d4d4">.</span><span style="color:#8dc6ec">ALIGN_IN_TOP_LEFT</span><span style="color:#d4d4d4">,</span><i>·</i><span style="color:#b5cea8">0</span><span style="color:#d4d4d4">,</span><i>·</i><span style="color:#b5cea8">0</span><span style="color:#f2c634">)</span></div><div class="ln" style="top:89.24px">61</div><div class="a" style="left:65px;top:87.74px;width:30px;height:18.45px;background:#2e2e20;border-left:1px solid #4e4e46"><svg style="left:-0.5px;top:6.2px" width="8" height="7" viewBox="0 0 8 7"><path d="M0 3.5H7M4 1L6.8 3.5L4 6" stroke="#5a5a50" stroke-width="1" fill="none"/></svg></div><div class="code" style="top:89.24px;left:95.6px"><span style="color:#e89c3f">lvgl</span><span style="color:#d4d4d4">.</span><span style="color:#dcdcaa">obj_add_style</span><span style="color:#f2c634">(</span><span style="color:#e89c3f">ScreenA</span><span style="color:#d4d4d4">.</span><span style="color:#8dc6ec">contFather_ScreenA</span><span style="color:#d4d4d4">,</span><i>·</i><span style="color:#e89c3f">lvgl</span><span style="color:#d4d4d4">.</span><span style="color:#8dc6ec">CONT_PART_MAIN</span><span style="color:#d4d4d4">,</span><i>·</i><span style="color:#e89c3f">lvgl_UiDesigner_DefaultContStyle</span><span style="color:#f2c634">)</span></div><div class="ln" style="top:107.70px">62</div><div class="a" style="left:65px;top:106.20px;width:1px;height:18.45px;background:#46463e"></div><div class="code" style="top:107.70px;left:65.6px"></div><div class="ln" style="top:126.16px">63</div><div class="a" style="left:65px;top:124.66px;width:30px;height:18.45px;background:#2e2e20;border-left:1px solid #4e4e46"><svg style="left:-0.5px;top:6.2px" width="8" height="7" viewBox="0 0 8 7"><path d="M0 3.5H7M4 1L6.8 3.5L4 6" stroke="#5a5a50" stroke-width="1" fill="none"/></svg></div><div class="code" style="top:126.16px;left:95.6px"><span style="color:#6a9955">--This<i>·</i>is<i>·</i>the<i>·</i>IMGBTN_PART_MAIN&#x27;s<i>·</i>style<i>·</i>of<i>·</i>ScreenA.LvglImgBtn1</span></div><div class="ln" style="top:144.62px">64</div><div class="a" style="left:65px;top:143.12px;width:30px;height:18.45px;background:#2e2e20;border-left:1px solid #4e4e46"><svg style="left:-0.5px;top:6.2px" width="8" height="7" viewBox="0 0 8 7"><path d="M0 3.5H7M4 1L6.8 3.5L4 6" stroke="#5a5a50" stroke-width="1" fill="none"/></svg></div><div class="code" style="top:144.62px;left:95.6px"><span style="color:#e89c3f">Style_LvglImgBtn1_1</span><i>·</i><span style="color:#d4d4d4">=</span><i>·</i><span style="color:#e89c3f">lvgl</span><span style="color:#d4d4d4">.</span><span style="color:#dcdcaa">style_t</span><span style="color:#f2c634">(</span><span style="color:#f2c634">)</span></div><div class="ln" style="top:163.08px">65</div><div class="a" style="left:65px;top:161.58px;width:30px;height:18.45px;background:#2e2e20;border-left:1px solid #4e4e46"><svg style="left:-0.5px;top:6.2px" width="8" height="7" viewBox="0 0 8 7"><path d="M0 3.5H7M4 1L6.8 3.5L4 6" stroke="#5a5a50" stroke-width="1" fill="none"/></svg></div><div class="code" style="top:163.08px;left:95.6px"><span style="color:#e89c3f">lvgl</span><span style="color:#d4d4d4">.</span><span style="color:#dcdcaa">style_init</span><span style="color:#f2c634">(</span><span style="color:#e89c3f">Style_LvglImgBtn1_1</span><span style="color:#f2c634">)</span></div><div class="ln" style="top:181.54px">66</div><div class="a" style="left:65px;top:180.04px;width:30px;height:18.45px;background:#2e2e20;border-left:1px solid #4e4e46"><svg style="left:-0.5px;top:6.2px" width="8" height="7" viewBox="0 0 8 7"><path d="M0 3.5H7M4 1L6.8 3.5L4 6" stroke="#5a5a50" stroke-width="1" fill="none"/></svg></div><div class="code" style="top:181.54px;left:95.6px"><span style="color:#e89c3f">lvgl</span><span style="color:#d4d4d4">.</span><span style="color:#dcdcaa">style_set_bg_color</span><span style="color:#f2c634">(</span><span style="color:#e89c3f">Style_LvglImgBtn1_1</span><span style="color:#d4d4d4">,</span><i>·</i><span style="color:#e89c3f">lvgl</span><span style="color:#d4d4d4">.</span><span style="color:#8dc6ec">STATE_DEFAULT</span><span style="color:#d4d4d4">,</span><i>·</i><span style="color:#e89c3f">lvgl</span><span style="color:#d4d4d4">.</span><span style="color:#dcdcaa">color_hex</span><span style="color:#da70d6">(</span><span style="color:#b5cea8">0xEC89B9</span><span style="color:#da70d6">)</span><span style="color:#f2c634">)</span></div><div class="ln" style="top:200.00px">67</div><div class="a" style="left:65px;top:198.50px;width:30px;height:18.45px;background:#2e2e20;border-left:1px solid #4e4e46"><svg style="left:-0.5px;top:6.2px" width="8" height="7" viewBox="0 0 8 7"><path d="M0 3.5H7M4 1L6.8 3.5L4 6" stroke="#5a5a50" stroke-width="1" fill="none"/></svg></div><div class="code" style="top:200.00px;left:95.6px"><span style="color:#e89c3f">lvgl</span><span style="color:#d4d4d4">.</span><span style="color:#dcdcaa">style_set_bg_opa</span><span style="color:#f2c634">(</span><span style="color:#e89c3f">Style_LvglImgBtn1_1</span><span style="color:#d4d4d4">,</span><i>·</i><span style="color:#e89c3f">lvgl</span><span style="color:#d4d4d4">.</span><span style="color:#8dc6ec">STATE_DEFAULT</span><span style="color:#d4d4d4">,</span><i>·</i><span style="color:#b5cea8">160</span><span style="color:#f2c634">)</span></div><div class="ln" style="top:218.46px">68</div><div class="a" style="left:65px;top:216.96px;width:30px;height:18.45px;background:#2e2e20;border-left:1px solid #4e4e46"><svg style="left:-0.5px;top:6.2px" width="8" height="7" viewBox="0 0 8 7"><path d="M0 3.5H7M4 1L6.8 3.5L4 6" stroke="#5a5a50" stroke-width="1" fill="none"/></svg></div><div class="code" style="top:218.46px;left:95.6px"><span style="color:#e89c3f">lvgl</span><span style="color:#d4d4d4">.</span><span style="color:#dcdcaa">style_set_bg_grad_color</span><span style="color:#f2c634">(</span><span style="color:#e89c3f">Style_LvglImgBtn1_1</span><span style="color:#d4d4d4">,</span><i>·</i><span style="color:#e89c3f">lvgl</span><span style="color:#d4d4d4">.</span><span style="color:#8dc6ec">STATE_DEFAULT</span><span style="color:#d4d4d4">,</span><i>·</i><span style="color:#e89c3f">lvgl</span><span style="color:#d4d4d4">.</span><span style="color:#dcdcaa">color_hex</span><span style="color:#da70d6">(</span><span style="color:#b5cea8">0x84D7E7</span><span style="color:#da70d6">)</span><span style="color:#f2c634">)</span></div><div class="ln" style="top:236.92px">69</div><div class="a" style="left:65px;top:235.42px;width:30px;height:18.45px;background:#2e2e20;border-left:1px solid #4e4e46"><svg style="left:-0.5px;top:6.2px" width="8" height="7" viewBox="0 0 8 7"><path d="M0 3.5H7M4 1L6.8 3.5L4 6" stroke="#5a5a50" stroke-width="1" fill="none"/></svg></div><div class="code" style="top:236.92px;left:95.6px"><span style="color:#e89c3f">lvgl</span><span style="color:#d4d4d4">.</span><span style="color:#dcdcaa">style_set_bg_grad_dir</span><span style="color:#f2c634">(</span><span style="color:#e89c3f">Style_LvglImgBtn1_1</span><span style="color:#d4d4d4">,</span><i>·</i><span style="color:#e89c3f">lvgl</span><span style="color:#d4d4d4">.</span><span style="color:#8dc6ec">STATE_DEFAULT</span><span style="color:#d4d4d4">,</span><i>·</i><span style="color:#e89c3f">lvgl</span><span style="color:#d4d4d4">.</span><span style="color:#8dc6ec">GRAD_DIR_VER</span><span style="color:#f2c634">)</span></div><div class="ln" style="top:255.38px">70</div><div class="a" style="left:65px;top:253.88px;width:30px;height:18.45px;background:#2e2e20;border-left:1px solid #4e4e46"><svg style="left:-0.5px;top:6.2px" width="8" height="7" viewBox="0 0 8 7"><path d="M0 3.5H7M4 1L6.8 3.5L4 6" stroke="#5a5a50" stroke-width="1" fill="none"/></svg></div><div class="code" style="top:255.38px;left:95.6px"><span style="color:#e89c3f">lvgl</span><span style="color:#d4d4d4">.</span><span style="color:#dcdcaa">style_set_bg_blend_mode</span><span style="color:#f2c634">(</span><span style="color:#e89c3f">Style_LvglImgBtn1_1</span><span style="color:#d4d4d4">,</span><i>·</i><span style="color:#e89c3f">lvgl</span><span style="color:#d4d4d4">.</span><span style="color:#8dc6ec">STATE_DEFAULT</span><span style="color:#d4d4d4">,</span><i>·</i><span style="color:#e89c3f">lvgl</span><span style="color:#d4d4d4">.</span><span style="color:#8dc6ec">BLEND_MODE_NORMAL</span><span style="color:#f2c634">)</span></div><div class="ln" style="top:273.84px">71</div><div class="a" style="left:65px;top:272.34px;width:1px;height:18.45px;background:#46463e"></div><div class="code" style="top:273.84px;left:65.6px"></div><div class="ln" style="top:292.30px">72</div><div class="a" style="left:65px;top:290.80px;width:30px;height:18.45px;background:#2e2e20;border-left:1px solid #4e4e46"><svg style="left:-0.5px;top:6.2px" width="8" height="7" viewBox="0 0 8 7"><path d="M0 3.5H7M4 1L6.8 3.5L4 6" stroke="#5a5a50" stroke-width="1" fill="none"/></svg></div><div class="code" style="top:292.30px;left:95.6px"><span style="color:#6a9955">--This<i>·</i>is<i>·</i>the<i>·</i>base<i>·</i>code<i>·</i>of<i>·</i>ScreenA.LvglImgBtn1</span></div><div class="ln" style="top:310.76px">73</div><div class="a" style="left:65px;top:309.26px;width:30px;height:18.45px;background:#2e2e20;border-left:1px solid #4e4e46"><svg style="left:-0.5px;top:6.2px" width="8" height="7" viewBox="0 0 8 7"><path d="M0 3.5H7M4 1L6.8 3.5L4 6" stroke="#5a5a50" stroke-width="1" fill="none"/></svg></div><div class="code" style="top:310.76px;left:95.6px"><span style="color:#e89c3f">ScreenA</span><span style="color:#d4d4d4">.</span><span style="color:#8dc6ec">LvglImgBtn1</span><span style="color:#d4d4d4">.</span><span style="color:#8dc6ec">self</span><i>·</i><span style="color:#d4d4d4">=</span><i>·</i><span style="color:#e89c3f">lvgl</span><span style="color:#d4d4d4">.</span><span style="color:#dcdcaa">imgbtn_create</span><span style="color:#f2c634">(</span><span style="color:#e89c3f">ScreenA</span><span style="color:#d4d4d4">.</span><span style="color:#8dc6ec">contFather_ScreenA</span><span style="color:#d4d4d4">,</span><i>·</i><span style="color:#569cd6">nil</span><span style="color:#f2c634">)</span></div><div class="ln" style="top:329.22px">74</div><div class="a" style="left:65px;top:327.72px;width:30px;height:18.45px;background:#2e2e20;border-left:1px solid #4e4e46"><svg style="left:-0.5px;top:6.2px" width="8" height="7" viewBox="0 0 8 7"><path d="M0 3.5H7M4 1L6.8 3.5L4 6" stroke="#5a5a50" stroke-width="1" fill="none"/></svg></div><div class="code" style="top:329.22px;left:95.6px"><span style="color:#e89c3f">lvgl</span><span style="color:#d4d4d4">.</span><span style="color:#dcdcaa">obj_set_click</span><span style="color:#f2c634">(</span><span style="color:#e89c3f">ScreenA</span><span style="color:#d4d4d4">.</span><span style="color:#8dc6ec">LvglImgBtn1</span><span style="color:#d4d4d4">.</span><span style="color:#8dc6ec">self</span><span style="color:#d4d4d4">,</span><i>·</i><span style="color:#569cd6">true</span><span style="color:#f2c634">)</span></div><div class="ln" style="top:347.68px">75</div><div class="a" style="left:65px;top:346.18px;width:30px;height:18.45px;background:#2e2e20;border-left:1px solid #4e4e46"><svg style="left:-0.5px;top:6.2px" width="8" height="7" viewBox="0 0 8 7"><path d="M0 3.5H7M4 1L6.8 3.5L4 6" stroke="#5a5a50" stroke-width="1" fill="none"/></svg></div><div class="code" style="top:347.68px;left:95.6px"><span style="color:#e89c3f">lvgl</span><span style="color:#d4d4d4">.</span><span style="color:#dcdcaa">imgbtn_set_src</span><span style="color:#f2c634">(</span><span style="color:#e89c3f">ScreenA</span><span style="color:#d4d4d4">.</span><span style="color:#8dc6ec">LvglImgBtn1</span><span style="color:#d4d4d4">.</span><span style="color:#8dc6ec">self</span><span style="color:#d4d4d4">,</span><i>·</i><span style="color:#e89c3f">lvgl</span><span style="color:#d4d4d4">.</span><span style="color:#8dc6ec">BTN_STATE_RELEASED</span><span style="color:#d4d4d4">,</span><i>·</i><span style="color:#ce9178">&quot;/lua/released.png&quot;</span><span style="color:#f2c634">)</span></div><div class="ln" style="top:366.14px">76</div><div class="a" style="left:65px;top:364.64px;width:30px;height:18.45px;background:#2e2e20;border-left:1px solid #4e4e46"><svg style="left:-0.5px;top:6.2px" width="8" height="7" viewBox="0 0 8 7"><path d="M0 3.5H7M4 1L6.8 3.5L4 6" stroke="#5a5a50" stroke-width="1" fill="none"/></svg></div><div class="code" style="top:366.14px;left:95.6px"><span style="color:#e89c3f">lvgl</span><span style="color:#d4d4d4">.</span><span style="color:#dcdcaa">imgbtn_set_src</span><span style="color:#f2c634">(</span><span style="color:#e89c3f">ScreenA</span><span style="color:#d4d4d4">.</span><span style="color:#8dc6ec">LvglImgBtn1</span><span style="color:#d4d4d4">.</span><span style="color:#8dc6ec">self</span><span style="color:#d4d4d4">,</span><i>·</i><span style="color:#e89c3f">lvgl</span><span style="color:#d4d4d4">.</span><span style="color:#8dc6ec">BTN_STATE_PRESSED</span><span style="color:#d4d4d4">,</span><i>·</i><span style="color:#ce9178">&quot;/lua/pressed.png&quot;</span><span style="color:#f2c634">)</span></div><div class="ln" style="top:384.60px">77</div><div class="a" style="left:65px;top:383.10px;width:30px;height:18.45px;background:#2e2e20;border-left:1px solid #4e4e46"><svg style="left:-0.5px;top:6.2px" width="8" height="7" viewBox="0 0 8 7"><path d="M0 3.5H7M4 1L6.8 3.5L4 6" stroke="#5a5a50" stroke-width="1" fill="none"/></svg></div><div class="code" style="top:384.60px;left:95.6px"><span style="color:#e89c3f">lvgl</span><span style="color:#d4d4d4">.</span><span style="color:#dcdcaa">obj_align</span><span style="color:#f2c634">(</span><span style="color:#e89c3f">ScreenA</span><span style="color:#d4d4d4">.</span><span style="color:#8dc6ec">LvglImgBtn1</span><span style="color:#d4d4d4">.</span><span style="color:#8dc6ec">self</span><span style="color:#d4d4d4">,</span><i>·</i><span style="color:#e89c3f">ScreenA</span><span style="color:#d4d4d4">.</span><span style="color:#8dc6ec">contFather_ScreenA</span><span style="color:#d4d4d4">,</span><i>·</i><span style="color:#e89c3f">lvgl</span><span style="color:#d4d4d4">.</span><span style="color:#8dc6ec">ALIGN_IN_TOP_LEFT</span><span style="color:#d4d4d4">,</span><i>·</i><span style="color:#b5cea8">100</span><span style="color:#d4d4d4">,</span><i>·</i><span style="color:#b5cea8">300</span><span style="color:#f2c634">)</span></div><div class="ln" style="top:403.06px">78</div><div class="a" style="left:65px;top:401.56px;width:30px;height:18.45px;background:#2e2e20;border-left:1px solid #4e4e46"><svg style="left:-0.5px;top:6.2px" width="8" height="7" viewBox="0 0 8 7"><path d="M0 3.5H7M4 1L6.8 3.5L4 6" stroke="#5a5a50" stroke-width="1" fill="none"/></svg></div><div class="code" style="top:403.06px;left:95.6px"><span style="color:#e89c3f">lvgl</span><span style="color:#d4d4d4">.</span><span style="color:#dcdcaa">obj_add_style</span><span style="color:#f2c634">(</span><span style="color:#e89c3f">ScreenA</span><span style="color:#d4d4d4">.</span><span style="color:#8dc6ec">LvglImgBtn1</span><span style="color:#d4d4d4">.</span><span style="color:#8dc6ec">self</span><span style="color:#d4d4d4">,</span><i>·</i><span style="color:#e89c3f">lvgl</span><span style="color:#d4d4d4">.</span><span style="color:#8dc6ec">IMGBTN_PART_MAIN</span><span style="color:#d4d4d4">,</span><i>·</i><span style="color:#e89c3f">Style_LvglImgBtn1_1</span><span style="color:#f2c634">)</span></div><div class="ln" style="top:421.52px">79</div><div class="a" style="left:65px;top:420.02px;width:30px;height:18.45px;background:#2e2e20;border-left:1px solid #4e4e46"><svg style="left:-0.5px;top:6.2px" width="8" height="7" viewBox="0 0 8 7"><path d="M0 3.5H7M4 1L6.8 3.5L4 6" stroke="#5a5a50" stroke-width="1" fill="none"/></svg></div><div class="code" style="top:421.52px;left:95.6px"><span style="color:#6a9955">--This<i>·</i>is<i>·</i>to<i>·</i>add<i>·</i>callback<i>·</i>function<i>·</i>for<i>·</i>ScreenA.LvglImgBtn1</span></div><div class="ln" style="top:439.98px">80</div><div class="a" style="left:65px;top:438.48px;width:30px;height:18.45px;background:#2e2e20;border-left:1px solid #4e4e46"><svg style="left:-0.5px;top:6.2px" width="8" height="7" viewBox="0 0 8 7"><path d="M0 3.5H7M4 1L6.8 3.5L4 6" stroke="#5a5a50" stroke-width="1" fill="none"/></svg></div><div class="code" style="top:439.98px;left:95.6px"><span style="color:#6a9955">--This<i>·</i>is<i>·</i>callBack<i>·</i>function<i>·</i>of<i>·</i>ScreenA.LvglImgBtn1</span></div><div class="ln" style="top:458.44px">81</div><div class="a" style="left:65px;top:456.94px;width:30px;height:18.45px;background:#2e2e20;border-left:1px solid #4e4e46"><svg style="left:-0.5px;top:6.2px" width="8" height="7" viewBox="0 0 8 7"><path d="M0 3.5H7M4 1L6.8 3.5L4 6" stroke="#5a5a50" stroke-width="1" fill="none"/></svg></div><div class="code" style="top:458.44px;left:95.6px"><span style="color:#c586c0">local</span><i>·</i><span style="color:#d9d9c4">handleLvglImgBtn1</span><i>·</i><span style="color:#d4d4d4">=</span><i>·</i><span style="color:#c586c0">function</span><span style="color:#f2c634">(</span><span style="color:#9cdcfe">obj</span><span style="color:#d4d4d4">,</span><i>·</i><span style="color:#9cdcfe">e</span><span style="color:#f2c634">)</span></div><div class="ln" style="top:476.90px">82</div><div class="a" style="left:65px;top:475.40px;width:30px;height:18.45px;background:#2e2e20;border-left:1px solid #4e4e46"><svg style="left:-0.5px;top:6.2px" width="8" height="7" viewBox="0 0 8 7"><path d="M0 3.5H7M4 1L6.8 3.5L4 6" stroke="#5a5a50" stroke-width="1" fill="none"/></svg></div><div class="a" style="left:95px;top:475.40px;width:30px;height:18.45px;background:#242e24;border-left:1px solid #4e4e46"><svg style="left:-0.5px;top:6.2px" width="8" height="7" viewBox="0 0 8 7"><path d="M0 3.5H7M4 1L6.8 3.5L4 6" stroke="#5a5a50" stroke-width="1" fill="none"/></svg></div><div class="code" style="top:476.90px;left:125.6px"><span style="color:#e89c3f">ScreenA</span><span style="color:#d4d4d4">.</span><span style="color:#8dc6ec">LvglImgBtn1</span><span style="color:#d4d4d4">.</span><span style="color:#8dc6ec">cb</span><span style="color:#f2c634">(</span><span style="color:#9cdcfe">e</span><span style="color:#f2c634">)</span></div><div class="ln" style="top:495.36px">83</div><div class="a" style="left:65px;top:493.86px;width:30px;height:18.45px;background:#2e2e20;border-left:1px solid #4e4e46"><svg style="left:-0.5px;top:6.2px" width="8" height="7" viewBox="0 0 8 7"><path d="M0 3.5H7M4 1L6.8 3.5L4 6" stroke="#5a5a50" stroke-width="1" fill="none"/></svg></div><div class="a" style="left:95px;top:493.86px;width:30px;height:18.45px;background:#242e24;border-left:1px solid #4e4e46"><svg style="left:-0.5px;top:6.2px" width="8" height="7" viewBox="0 0 8 7"><path d="M0 3.5H7M4 1L6.8 3.5L4 6" stroke="#5a5a50" stroke-width="1" fill="none"/></svg></div><div class="code" style="top:495.36px;left:125.6px"><span style="color:#e89c3f">ScreenA</span><span style="color:#d4d4d4">.</span><span style="color:#8dc6ec">LvglImgBtn1</span><span style="color:#d4d4d4">.</span><span style="color:#8dc6ec">cb</span><i>·</i><span style="color:#d4d4d4">=</span><i>·</i><span style="color:#c586c0">function</span><span style="color:#f2c634">(</span><span style="color:#9cdcfe">e</span><span style="color:#f2c634">)</span></div><div class="ln" style="top:513.82px">84</div><div class="a" style="left:65px;top:512.32px;width:30px;height:18.45px;background:#2e2e20;border-left:1px solid #4e4e46"><svg style="left:-0.5px;top:6.2px" width="8" height="7" viewBox="0 0 8 7"><path d="M0 3.5H7M4 1L6.8 3.5L4 6" stroke="#5a5a50" stroke-width="1" fill="none"/></svg></div><div class="a" style="left:95px;top:512.32px;width:30px;height:18.45px;background:#242e24;border-left:1px solid #4e4e46"><svg style="left:-0.5px;top:6.2px" width="8" height="7" viewBox="0 0 8 7"><path d="M0 3.5H7M4 1L6.8 3.5L4 6" stroke="#5a5a50" stroke-width="1" fill="none"/></svg></div><div class="a" style="left:125px;top:512.32px;width:30px;height:18.45px;background:#2e242e;border-left:1px solid #4e4e46"><svg style="left:-0.5px;top:6.2px" width="8" height="7" viewBox="0 0 8 7"><path d="M0 3.5H7M4 1L6.8 3.5L4 6" stroke="#5a5a50" stroke-width="1" fill="none"/></svg></div><div class="code" style="top:513.82px;left:155.6px"><span style="color:#c586c0">if</span><i>·</i><span style="color:#f2c634">(</span><span style="color:#9cdcfe">e</span><i>·</i><span style="color:#d4d4d4">=</span><span style="color:#d4d4d4">=</span><i>·</i><span style="color:#e89c3f">lvgl</span><span style="color:#d4d4d4">.</span><span style="color:#8dc6ec">EVENT_CLICKED</span><span style="color:#f2c634">)</span><span style="color:#c586c0">then</span></div><div class="ln" style="top:532.28px">85</div><div class="a" style="left:65px;top:530.78px;width:30px;height:18.45px;background:#2e2e20;border-left:1px solid #4e4e46"><svg style="left:-0.5px;top:6.2px" width="8" height="7" viewBox="0 0 8 7"><path d="M0 3.5H7M4 1L6.8 3.5L4 6" stroke="#5a5a50" stroke-width="1" fill="none"/></svg></div><div class="a" style="left:95px;top:530.78px;width:30px;height:18.45px;background:#242e24;border-left:1px solid #4e4e46"><svg style="left:-0.5px;top:6.2px" width="8" height="7" viewBox="0 0 8 7"><path d="M0 3.5H7M4 1L6.8 3.5L4 6" stroke="#5a5a50" stroke-width="1" fill="none"/></svg></div><div class="a" style="left:125px;top:530.78px;width:30px;height:18.45px;background:#2e242e;border-left:1px solid #4e4e46"><svg style="left:-0.5px;top:6.2px" width="8" height="7" viewBox="0 0 8 7"><path d="M0 3.5H7M4 1L6.8 3.5L4 6" stroke="#5a5a50" stroke-width="1" fill="none"/></svg></div><div class="a" style="left:155px;top:530.78px;width:30px;height:18.45px;background:#1e2c2c;border-left:1px solid #4e4e46"><svg style="left:-0.5px;top:6.2px" width="8" height="7" viewBox="0 0 8 7"><path d="M0 3.5H7M4 1L6.8 3.5L4 6" stroke="#5a5a50" stroke-width="1" fill="none"/></svg></div><div class="code" style="top:532.28px;left:185.6px"><span style="color:#e89c3f">clicked</span><span style="color:#f2c634">(</span><span style="color:#f2c634">)</span></div><div class="ln" style="top:550.74px">86</div><div class="a" style="left:65px;top:549.24px;width:30px;height:18.45px;background:#2e2e20;border-left:1px solid #4e4e46"><svg style="left:-0.5px;top:6.2px" width="8" height="7" viewBox="0 0 8 7"><path d="M0 3.5H7M4 1L6.8 3.5L4 6" stroke="#5a5a50" stroke-width="1" fill="none"/></svg></div><div class="a" style="left:95px;top:549.24px;width:30px;height:18.45px;background:#242e24;border-left:1px solid #4e4e46"><svg style="left:-0.5px;top:6.2px" width="8" height="7" viewBox="0 0 8 7"><path d="M0 3.5H7M4 1L6.8 3.5L4 6" stroke="#5a5a50" stroke-width="1" fill="none"/></svg></div><div class="a" style="left:125px;top:549.24px;width:30px;height:18.45px;background:#2e242e;border-left:1px solid #4e4e46"><svg style="left:-0.5px;top:6.2px" width="8" height="7" viewBox="0 0 8 7"><path d="M0 3.5H7M4 1L6.8 3.5L4 6" stroke="#5a5a50" stroke-width="1" fill="none"/></svg></div><div class="code" style="top:550.74px;left:155.6px"><span style="color:#c586c0">end</span></div><div class="ln" style="top:569.20px">87</div><div class="a" style="left:65px;top:567.70px;width:30px;height:18.45px;background:#2e2e20;border-left:1px solid #4e4e46"><svg style="left:-0.5px;top:6.2px" width="8" height="7" viewBox="0 0 8 7"><path d="M0 3.5H7M4 1L6.8 3.5L4 6" stroke="#5a5a50" stroke-width="1" fill="none"/></svg></div><div class="a" style="left:95px;top:567.70px;width:30px;height:18.45px;background:#242e24;border-left:1px solid #4e4e46"><svg style="left:-0.5px;top:6.2px" width="8" height="7" viewBox="0 0 8 7"><path d="M0 3.5H7M4 1L6.8 3.5L4 6" stroke="#5a5a50" stroke-width="1" fill="none"/></svg></div><div class="code" style="top:569.20px;left:125.6px"><span style="color:#c586c0">end</span></div><div class="ln" style="top:587.66px">88</div><div class="a" style="left:65px;top:586.16px;width:30px;height:18.45px;background:#2e2e20;border-left:1px solid #4e4e46"><svg style="left:-0.5px;top:6.2px" width="8" height="7" viewBox="0 0 8 7"><path d="M0 3.5H7M4 1L6.8 3.5L4 6" stroke="#5a5a50" stroke-width="1" fill="none"/></svg></div><div class="code" style="top:587.66px;left:95.6px"><span style="color:#c586c0">end</span></div><div class="ln" style="top:606.12px">89</div><div class="a" style="left:65px;top:604.62px;width:30px;height:18.45px;background:#2e2e20;border-left:1px solid #4e4e46"><svg style="left:-0.5px;top:6.2px" width="8" height="7" viewBox="0 0 8 7"><path d="M0 3.5H7M4 1L6.8 3.5L4 6" stroke="#5a5a50" stroke-width="1" fill="none"/></svg></div><div class="code" style="top:606.12px;left:95.6px"><span style="color:#e89c3f">lvgl</span><span style="color:#d4d4d4">.</span><span style="color:#dcdcaa">obj_set_event_cb</span><span style="color:#f2c634">(</span><span style="color:#e89c3f">ScreenA</span><span style="color:#d4d4d4">.</span><span style="color:#8dc6ec">LvglImgBtn1</span><span style="color:#d4d4d4">.</span><span style="color:#8dc6ec">self</span><span style="color:#d4d4d4">,</span><i>·</i><span style="color:#d9d9c4">handleLvglImgBtn1</span><span style="color:#f2c634">)</span></div><div class="ln" style="top:624.58px">90</div><div class="code" style="top:624.58px;left:65.6px"><span style="color:#c586c0">end</span></div><div class="ln" style="top:643.04px">91</div><div class="code" style="top:643.04px;left:65.6px"><span style="color:#e89c3f">ScreenA</span><span style="color:#d4d4d4">.</span><span style="color:#8dc6ec">free</span><i>·</i><span style="color:#d4d4d4">=</span><i>·</i><span style="color:#c586c0">function</span><span style="color:#f2c634">(</span><span style="color:#f2c634">)</span></div><div class="ln" style="top:661.50px">92</div><div class="a" style="left:65px;top:660.00px;width:30px;height:18.45px;background:#2e2e20;border-left:1px solid #4e4e46"><svg style="left:-0.5px;top:6.2px" width="8" height="7" viewBox="0 0 8 7"><path d="M0 3.5H7M4 1L6.8 3.5L4 6" stroke="#5a5a50" stroke-width="1" fill="none"/></svg></div><div class="code" style="top:661.50px;left:95.6px"><span style="color:#e89c3f">lvgl</span><span style="color:#d4d4d4">.</span><span style="color:#dcdcaa">obj_del</span><span style="color:#f2c634">(</span><span style="color:#e89c3f">ScreenA</span><span style="color:#d4d4d4">.</span><span style="color:#8dc6ec">contFather_ScreenA</span><span style="color:#f2c634">)</span></div><div class="ln" style="top:679.96px">93</div><div class="a" style="left:65px;top:678.46px;width:30px;height:18.45px;background:#2e2e20;border-left:1px solid #4e4e46"><svg style="left:-0.5px;top:6.2px" width="8" height="7" viewBox="0 0 8 7"><path d="M0 3.5H7M4 1L6.8 3.5L4 6" stroke="#5a5a50" stroke-width="1" fill="none"/></svg></div><div class="code" style="top:679.96px;left:95.6px"><span style="color:#e89c3f">ScreenA</span><span style="color:#d4d4d4">.</span><span style="color:#8dc6ec">contFather_ScreenA</span><i>·</i><span style="color:#d4d4d4">=</span><i>·</i><span style="color:#569cd6">nil</span></div><div class="ln" style="top:698.42px">94</div><div class="code" style="top:698.42px;left:65.6px"><span style="color:#c586c0">end</span></div><div class="ln" style="top:716.88px">95</div><div class="code" style="top:716.88px;left:65.6px"></div></div>
<div class="a" style="left:1047px;top:79px;width:807px;height:3px;background:linear-gradient(rgba(0,0,0,0.55),rgba(0,0,0,0))"></div>
<div class="a" style="left:1854px;top:79px;width:1px;height:734px;background:#2a2a2a"></div>
<div class="a" style="left:783.9px;top:173.9px;width:232.3px;height:79.2px;border:2.2px solid #e02a33"></div>
<div class="a" style="left:1118.8px;top:502px;width:544.7px;height:205.3px;border:2.6px solid #c8323a"></div>
<div class="a t" style="left:574.8px;top:259.2px;font-size:51px;line-height:51px;color:#ffffff;-webkit-text-stroke:6.5px #ffffff;letter-spacing:-0.1px">选择函数</div>
<div class="a t" style="left:574.8px;top:259.2px;font-size:51px;line-height:51px;color:#e8202a;-webkit-text-stroke:2px #e8202a;letter-spacing:-0.1px">选择函数</div>
<div class="a t" style="left:1521.5px;top:731.8px;font-size:51px;line-height:51px;color:#ffffff;-webkit-text-stroke:6.5px #ffffff;letter-spacing:-0.1px">注册回调函数</div>
<div class="a t" style="left:1521.5px;top:731.8px;font-size:51px;line-height:51px;color:#e8202a;-webkit-text-stroke:2px #e8202a;letter-spacing:-0.1px">注册回调函数</div>
<svg style="left:725px;top:215px;" width="60" height="40" viewBox="0 0 60 40"><path d="M12 31.6L12.6 30.9L42.8 15L41.4 11.1H54.9L46.3 21.4L44.8 18.4Z" fill="#e8202a" stroke="#e8202a" stroke-width="0.4" stroke-linejoin="round"/></svg>
<svg style="left:1465px;top:715px;" width="45" height="40" viewBox="0 0 45 40"><path d="M11.3 8.1L24.4 11.6L22.1 14.3L38.9 31.2L38.3 31.9L18.7 18.2L16.2 20.2Z" fill="#e8202a" stroke="#e8202a" stroke-width="0.4" stroke-linejoin="round"/></svg></body></html>
